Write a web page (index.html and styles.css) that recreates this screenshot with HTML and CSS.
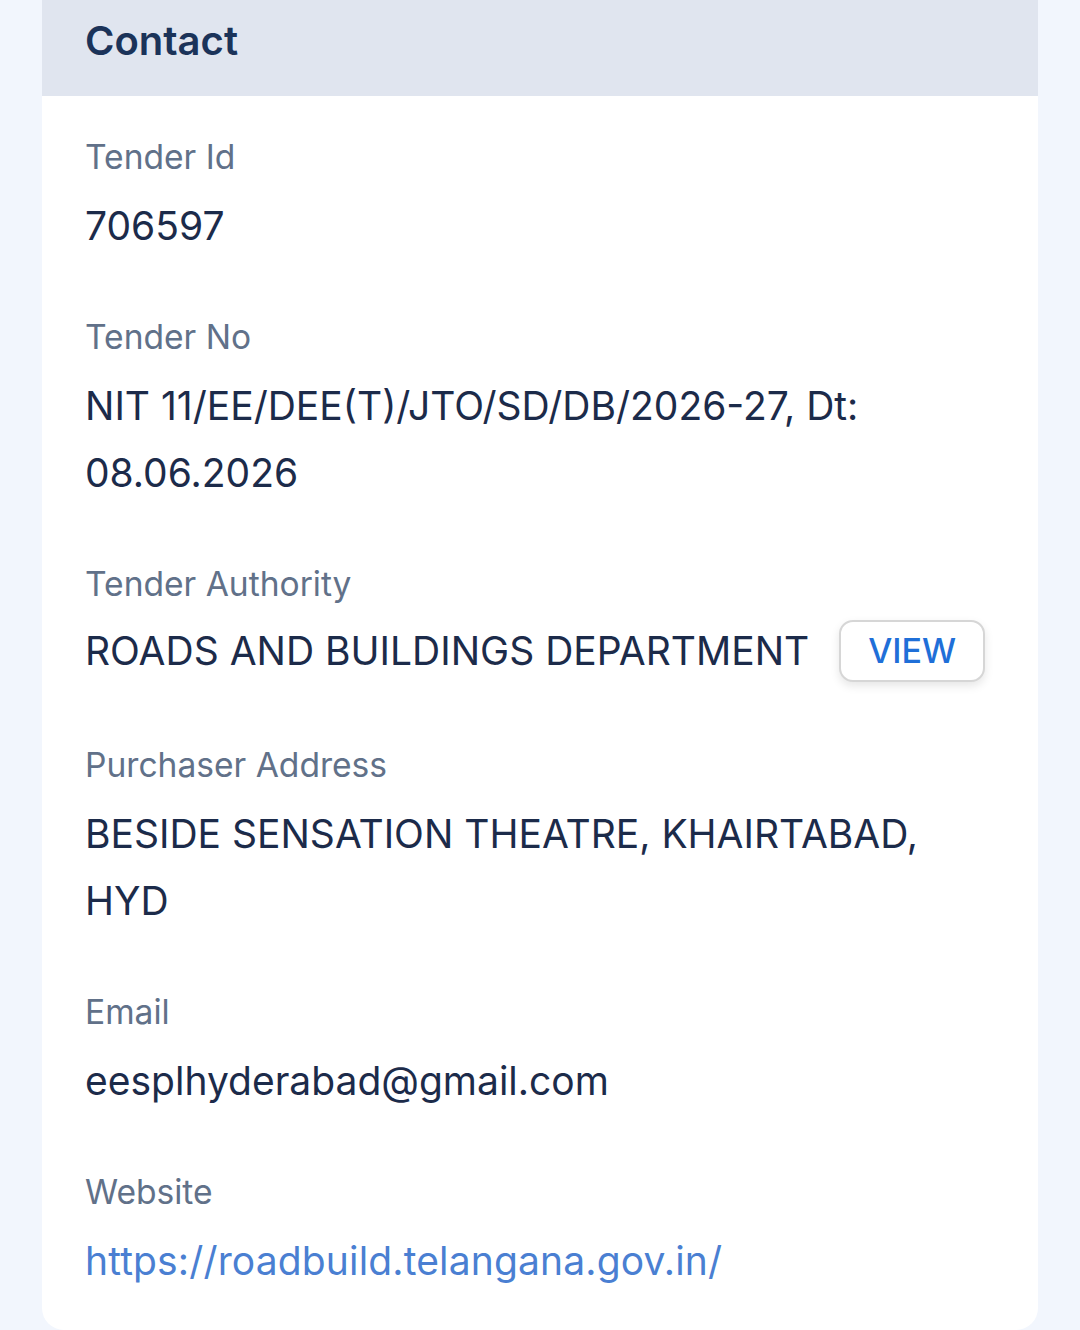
FILE: index.html
```html
<!DOCTYPE html>
<html>
<head>
<meta charset="utf-8">
<link rel="stylesheet" href="styles.css">
</head>
<body>
<div class="page">
  <div class="card">
    <div class="card-header"><h2 class="title">Contact</h2></div>
    <div class="card-body">
      <div class="field">
        <div class="label">Tender Id</div>
        <div class="value">706597</div>
      </div>
      <div class="field">
        <div class="label">Tender No</div>
        <div class="value">NIT 11/EE/DEE(T)/JTO/SD/DB/2026-27, Dt: 08.06.2026</div>
      </div>
      <div class="field">
        <div class="label">Tender Authority</div>
        <div class="value-row">
          <div class="value">ROADS AND BUILDINGS DEPARTMENT</div>
          <button class="view-btn">VIEW</button>
        </div>
      </div>
      <div class="field">
        <div class="label">Purchaser Address</div>
        <div class="value">BESIDE SENSATION THEATRE, KHAIRTABAD, HYD</div>
      </div>
      <div class="field">
        <div class="label">Email</div>
        <div class="value">eesplhyderabad@gmail.com</div>
      </div>
      <div class="field">
        <div class="label">Website</div>
        <div class="value link">https://roadbuild.telangana.gov.in/</div>
      </div>
    </div>
  </div>
</div>
</body>
</html>
```

FILE: styles.css
```css
* { box-sizing: border-box; }
html, body { margin: 0; padding: 0; }
body {
  background: #f2f6fd;
  font-family: Inter, "Noto Sans", sans-serif;
  width: 1080px;
  height: 1330px;
  overflow: hidden;
}
.page {
  padding: 0 42px;
}
.card {
  background: #ffffff;
  border-radius: 0 0 22px 22px;
  overflow: hidden;
  height: 1330px;
}
.card-header {
  background: #e0e5ef;
  height: 96px;
  padding: 0 43px;
  display: flex;
  align-items: center;
}
.title {
  margin: 0;
  font-size: 40px;
  font-weight: 600;
  color: #1b3359;
  line-height: 1;
  padding-bottom: 14px;
}
.card-body {
  padding: 39px 43px 0 43px;
  display: flex;
  flex-direction: column;
  gap: 56.2px;
}
.field {
  display: flex;
  flex-direction: column;
  gap: 13px;
}
.label {
  font-size: 33.6px;
  line-height: 44px;
  color: #617189;
}
.value {
  font-size: 39px;
  line-height: 67px;
  color: #1c2b4a;
}
.value-row {
  display: flex;
  align-items: center;
  gap: 30px;
  margin-top: -2px;
  margin-bottom: 2px;
}
.view-btn {
  font-family: Inter, "Noto Sans", sans-serif;
  background: #ffffff;
  border: 2px solid #d6d6d6;
  border-radius: 14px;
  height: 62px;
  width: 146px;
  font-size: 34px;
  font-weight: 500;
  color: #1f6fd8;
  box-shadow: 0 4px 10px rgba(0,0,0,0.10);
  padding: 0;
}
.link {
  color: #4a7fd2;
  letter-spacing: 0.15px;
}
```
